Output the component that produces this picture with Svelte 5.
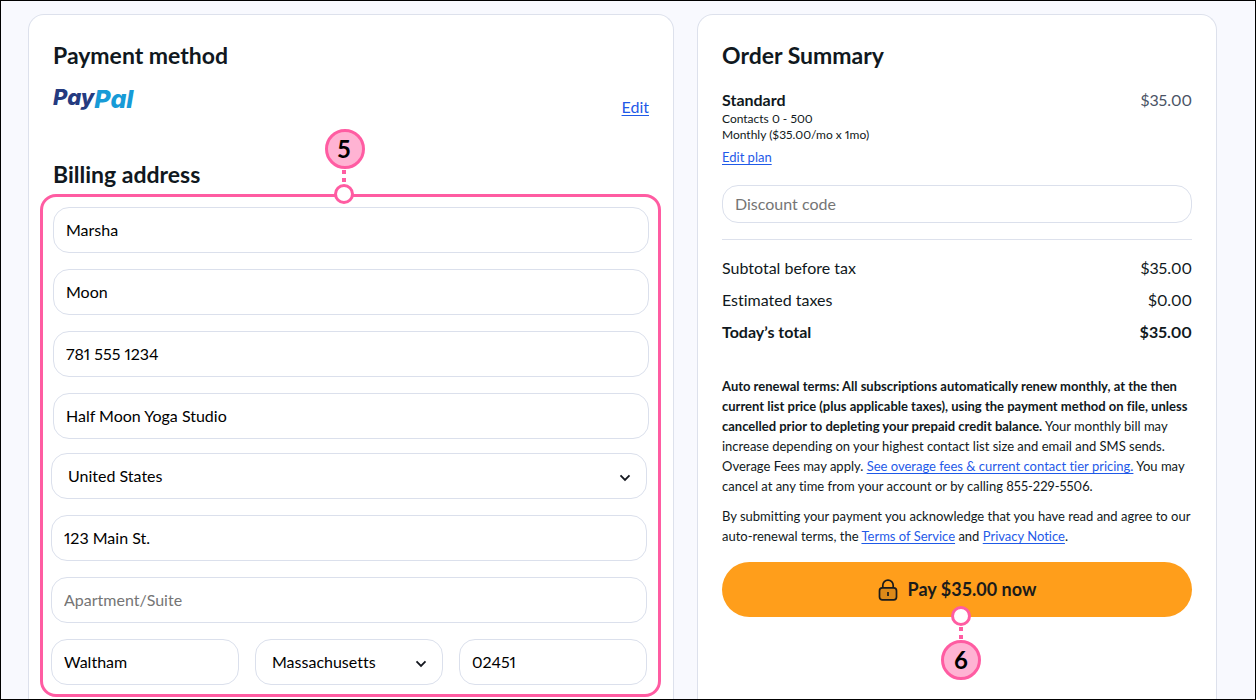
<script>
  let firstName = $state('Marsha');
  let lastName = $state('Moon');
  let phone = $state('781 555 1234');
  let company = $state('Half Moon Yoga Studio');
  let country = $state('United States');
  let street = $state('123 Main St.');
  let unit = $state('');
  let city = $state('Waltham');
  let region = $state('Massachusetts');
  let zip = $state('02451');
  let discount = $state('');
</script>

{#snippet chevron()}
  <svg class="chevron" width="12" height="8" viewBox="0 0 12 8" aria-hidden="true">
    <path d="M1.5 1.3 6 5.9l4.5-4.6" fill="none" stroke="#14171f" stroke-width="1.8" />
  </svg>
{/snippet}

<div class="page">
  <main class="columns">
    <section class="card">
      <h2>Payment method</h2>
      <div class="method">
        <div class="paypal"><span class="pay">Pay</span><span class="pal">Pal</span></div>
        <a class="edit" href="#payment">Edit</a>
      </div>

      <h2>Billing address</h2>
      <form class="highlight">
        <div class="fields">
          <input aria-label="First name" bind:value={firstName} />
          <input aria-label="Last name" bind:value={lastName} />
          <input aria-label="Phone" type="tel" bind:value={phone} />
          <input aria-label="Company" bind:value={company} />
        </div>
        <div class="fields location">
          <div class="select">
            <select aria-label="Country" bind:value={country}>
              <option>United States</option>
            </select>
            {@render chevron()}
          </div>
          <input aria-label="Street address" bind:value={street} />
          <input aria-label="Apartment or suite" placeholder="Apartment/Suite" bind:value={unit} />
          <div class="trio">
            <input aria-label="City" bind:value={city} />
            <div class="select">
              <select aria-label="State" bind:value={region}>
                <option>Massachusetts</option>
              </select>
              {@render chevron()}
            </div>
            <input aria-label="ZIP code" bind:value={zip} />
          </div>
        </div>
        <svg class="pin pin-above" width="40" height="76" viewBox="0 0 40 76">
          <circle cx="20" cy="20" r="18.5" fill="#ffb3d3" stroke="#ff5ca2" stroke-width="3" />
          <path d="M17 41h4v4h-4zM17 49h4v4h-4z" fill="#ff5ca2" />
          <circle cx="19" cy="65" r="8.5" fill="#fff" stroke="#ff5ca2" stroke-width="3" />
          <text x="19" y="29" text-anchor="middle">5</text>
        </svg>
      </form>
    </section>

    <section class="card">
      <h2>Order Summary</h2>
      <div class="plan">
        <strong>Standard</strong>
        <span class="price">$35.00</span>
      </div>
      <p class="detail">Contacts 0 - 500</p>
      <p class="detail">Monthly ($35.00/mo x 1mo)</p>
      <a class="edit-plan" href="#plan">Edit plan</a>

      <input class="discount" aria-label="Discount code" placeholder="Discount code" bind:value={discount} />

      <dl class="totals">
        <div><dt>Subtotal before tax</dt><dd>$35.00</dd></div>
        <div><dt>Estimated taxes</dt><dd>$0.00</dd></div>
        <div class="total"><dt>Today’s total</dt><dd>$35.00</dd></div>
      </dl>

      <div class="terms">
        <p>
          <strong>Auto renewal terms: All subscriptions automatically renew monthly, at the then<br />
          current list price (plus applicable taxes), using the payment method on file, unless<br />
          cancelled prior to depleting your prepaid credit balance.</strong> Your monthly bill may<br />
          increase depending on your highest contact list size and email and SMS sends.<br />
          Overage Fees may apply. <a href="#fees">See overage fees &amp; current contact tier pricing.</a> You may<br />
          cancel at any time from your account or by calling 855-229-5506.
        </p>
        <p>
          By submitting your payment you acknowledge that you have read and agree to our<br />
          auto-renewal terms, the <a href="#terms">Terms of Service</a> and <a href="#privacy">Privacy Notice</a>.
        </p>
      </div>

      <div class="checkout">
        <button type="button">
          <svg width="20" height="22" viewBox="0 0 20 22" aria-hidden="true">
            <rect x="1.5" y="8.9" width="17" height="12" rx="2.8" fill="#241c15" fill-opacity=".16" stroke="#1b1b1b" stroke-width="1.7" />
            <path d="M4.8 8.9V6.4a5.2 5.2 0 0 1 10.4 0v2.5" fill="none" stroke="#1b1b1b" stroke-width="1.7" />
            <path d="M10 13v4" stroke="#1b1b1b" stroke-width="1.7" />
          </svg>
          <span>Pay $35.00 now</span>
        </button>
        <svg class="pin pin-below" width="40" height="76" viewBox="0 0 40 76">
          <path d="M18 21h4v4h-4zM18 29h4v4h-4z" fill="#ff5ca2" />
          <circle cx="20" cy="10" r="8.5" fill="#fff" stroke="#ff5ca2" stroke-width="3" />
          <circle cx="20" cy="54" r="18.5" fill="#ffb3d3" stroke="#ff5ca2" stroke-width="3" />
          <text x="20" y="63" text-anchor="middle">6</text>
        </svg>
      </div>
    </section>
  </main>
</div>

<style>
  :global(body) {
    margin: 0;
    background: #f8f9fe;
  }

  .page,
  .page * {
    box-sizing: border-box;
  }

  .page {
    display: flex;
    min-height: 100vh;
    padding: 13px 38px 0 27px;
    border: 1px solid #000;
    background: #f8f9fe;
    color: #101820;
    font: 16px/24px Lato, sans-serif;
    font-variant-ligatures: none;
    font-variant-numeric: proportional-nums;
  }

  .columns {
    display: grid;
    flex: 1;
    grid-template-columns: minmax(0, 646fr) minmax(0, 520fr);
    gap: 23px;
  }

  .card {
    padding: 24px 24px 0;
    border: 1px solid #dde1ec;
    border-bottom: 0;
    border-radius: 16px 16px 0 0;
    background: #fff;
  }

  h2,
  p,
  dl,
  dd {
    margin: 0;
  }

  h2 {
    font-size: 23px;
    font-weight: 700;
    line-height: 32px;
  }

  a {
    color: #1f5ae8;
    text-underline-offset: 2px;
  }

  .method {
    display: flex;
    align-items: flex-end;
    justify-content: space-between;
    height: 36px;
    margin: 12px 0 39px;
  }

  .paypal {
    display: flex;
    align-items: flex-start;
    align-self: flex-start;
    padding-top: 3px;
    font-family: Inter, sans-serif;
    font-style: italic;
    font-weight: 800;
  }

  .pay {
    color: #253b80;
    font-size: 22px;
    line-height: 22px;
  }

  .pal {
    color: #179bd7;
    font-size: 25px;
    line-height: 26px;
  }

  .highlight {
    position: relative;
    margin: 4px -12px 0 -13px;
    padding: 10px 9px 9px 10px;
    border: 3px solid #ff5ca2;
    border-radius: 16px;
  }

  .fields {
    display: grid;
    gap: 16px;
  }

  .location {
    margin: 14px 2px 0 -2px;
  }

  .trio {
    display: grid;
    grid-template-columns: repeat(3, minmax(0, 1fr));
    gap: 16px;
  }

  input,
  select {
    width: 100%;
    height: 46px;
    margin: 0;
    padding: 0 12px 2px;
    border: 1px solid #dbe0ec;
    border-radius: 16px;
    outline: 0;
    background: #fff;
    color: #000;
    font: inherit;
    font-variant: inherit;
  }

  input::placeholder {
    color: #757575;
    opacity: 1;
  }

  .select {
    display: grid;
    align-items: center;
  }

  .select > :global(*) {
    grid-area: 1 / 1;
  }

  select {
    padding: 0 16px;
    appearance: none;
  }

  .chevron {
    justify-self: end;
    margin: 4px 16px 0 0;
    pointer-events: none;
  }

  .pin {
    position: absolute;
    overflow: visible;
  }

  .pin text {
    fill: #000;
    font: 700 24px Lato, sans-serif;
  }

  .pin-above {
    top: -68px;
    left: 282px;
  }

  .pin-below {
    top: 44px;
    left: calc(50% - 16px);
  }

  .plan {
    display: flex;
    justify-content: space-between;
    margin-top: 17px;
    line-height: 24px;
  }

  .price {
    color: #4a5365;
  }

  .detail {
    font-size: 12px;
    line-height: 16px;
  }

  .plan + .detail {
    margin-top: -1px;
  }

  .edit-plan {
    display: block;
    width: fit-content;
    margin-top: 6px;
    font-size: 13px;
    line-height: 16px;
  }

  .discount {
    height: 38px;
    margin-top: 20px;
  }

  .totals {
    display: grid;
    gap: 8px;
    margin-top: 16px;
    padding-top: 16px;
    border-top: 1px solid #dde1ec;
  }

  .totals > div {
    display: flex;
    justify-content: space-between;
  }

  .total {
    font-weight: 700;
  }

  .terms {
    display: grid;
    gap: 10px;
    margin-top: 32px;
    font-size: 13px;
    line-height: 20px;
    white-space: nowrap;
  }

  .checkout {
    position: relative;
    margin-top: 16px;
  }

  button {
    display: flex;
    align-items: center;
    justify-content: center;
    gap: 10px;
    width: 100%;
    height: 55px;
    padding: 0;
    border: 0;
    border-radius: 28px;
    background: #ff9e1b;
    color: #1b1b1b;
    font: 700 18px/24px Lato, sans-serif;
  }

  button span {
    padding-bottom: 2px;
  }
</style>
